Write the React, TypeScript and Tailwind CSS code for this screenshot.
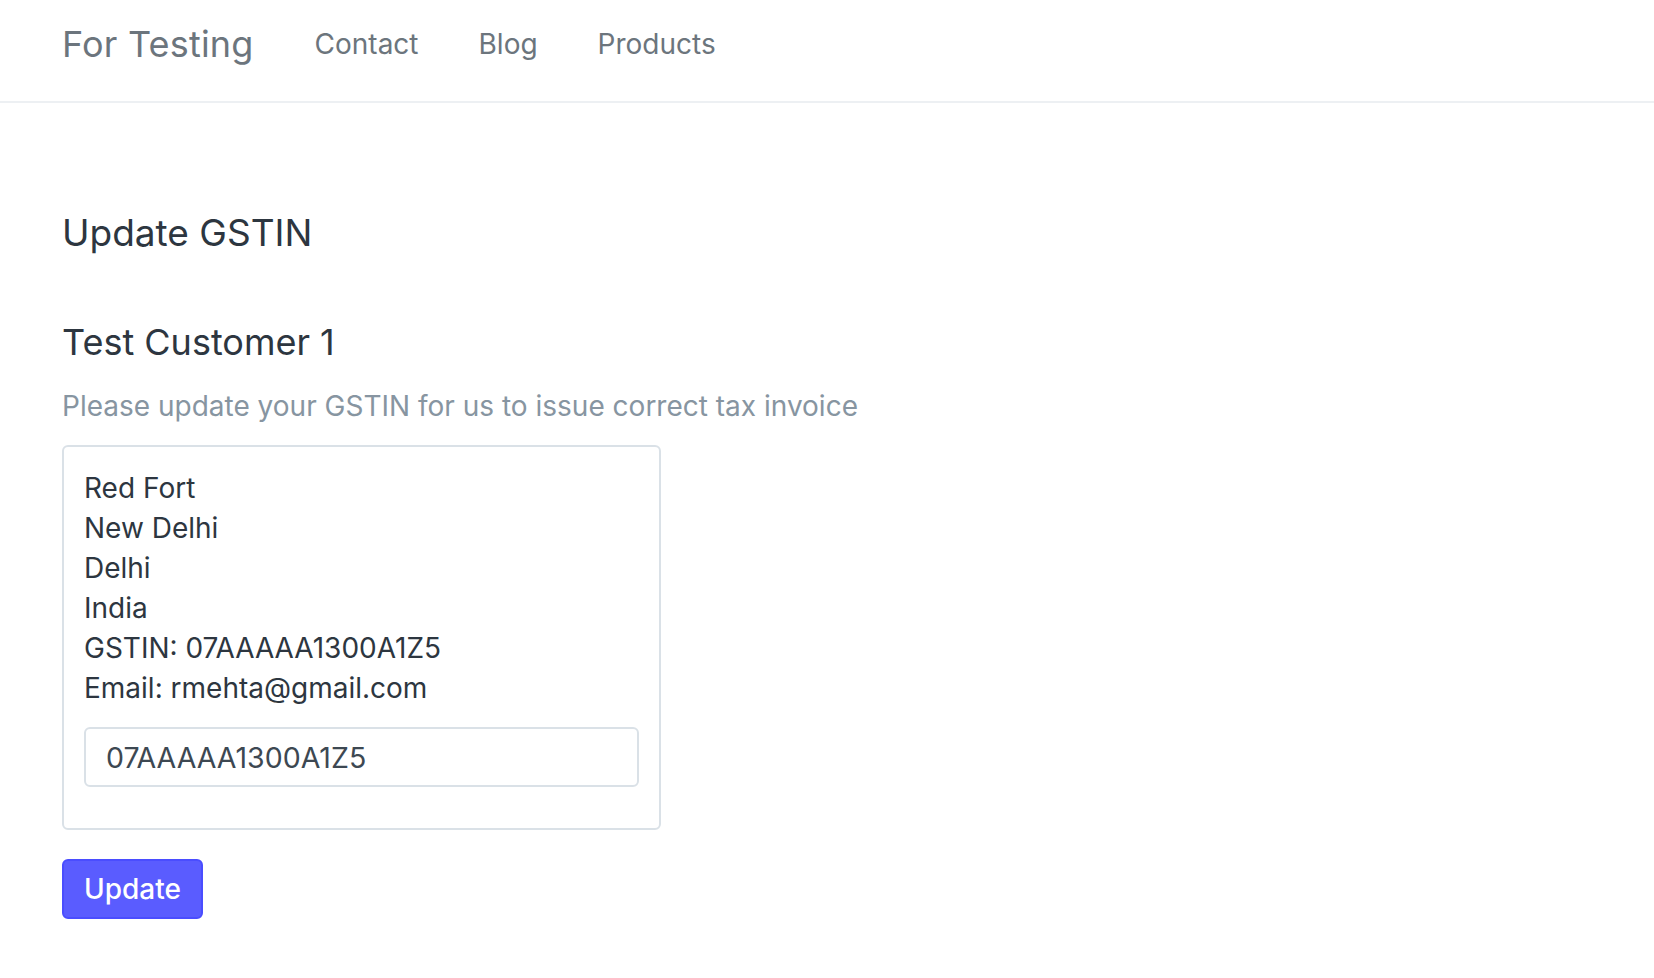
import React from 'react';

const navLinks = ["Contact", "Blog", "Products"];
const addressLines = ["Red Fort", "New Delhi", "Delhi", "India", "GSTIN: 07AAAAA1300A1Z5", "Email: rmehta@gmail.com"];

const App: React.FC = () => {
    return (
        <div className="min-h-screen bg-white font-['Inter',sans-serif]">
            <nav className="h-[103px] border-b-2 border-[#edf0f3] flex items-center px-[62px] pb-[14px]">
                <a className="text-[36px] text-[#6c757d] mr-[61px] tracking-[0.2px]">For Testing</a>
                <div className="flex items-center gap-[60px]">
                    {navLinks.map((link) => (
                        <a key={link} className="text-[28px] text-[#6c757d]">{link}</a>
                    ))}
                </div>
            </nav>

            <main className="px-[62px] pt-[104px]">
                <h1 className="text-[37px] leading-[52px] text-[#2d3640]">Update GSTIN</h1>
                <h2 className="text-[36px] leading-[48px] text-[#2d3640] mt-[59px]">Test Customer 1</h2>
                <p className="text-[28px] leading-[40px] text-[#8795a1] mt-[20px]">Please update your GSTIN for us to issue correct tax invoice</p>

                <div className="w-[599px] mt-[19px] border-2 border-[#dae1e7] rounded-[6px] pt-[21px] px-[20px] pb-[41px]">
                    <div className="text-[28px] leading-[40px] text-[#2d3640]">
                        {addressLines.map((line) => (
                            <div key={line}>{line}</div>
                        ))}
                    </div>
                    <input
                        type="text"
                        defaultValue="07AAAAA1300A1Z5"
                        className="mt-[19px] w-full h-[60px] border-2 border-[#dae1e7] rounded-[6px] px-[20px] text-[28.5px] text-[#3d4852] font-['Inter',sans-serif] outline-none"
                    />
                </div>

                <button className="mt-[29px] h-[60px] px-[20px] rounded-[6px] bg-[#5a5cff] border-2 border-[#4a4dff] text-white text-[28px] font-medium">
                    Update
                </button>
            </main>
        </div>
    );
};

export default App;
